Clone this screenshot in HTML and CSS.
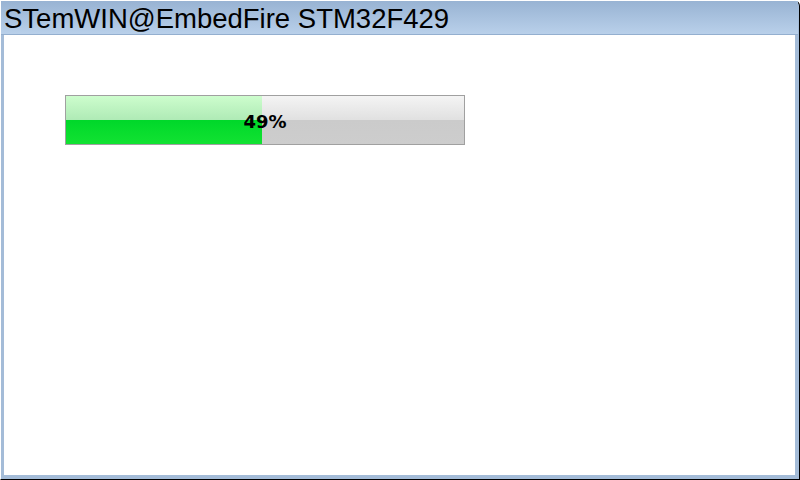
FILE: index.html
```html
<!DOCTYPE html>
<html>
<head>
<meta charset="utf-8">
<link rel="stylesheet" href="styles.css">
</head>
<body>
<div class="frame">
  <div class="inner">
    <div class="titlebar"><span class="title">STemWIN@EmbedFire STM32F429</span></div>
    <div class="client">
      <div class="progress">
        <div class="fill" style="width:196px"></div>
        <div class="rest"></div>
        <span class="label">49%</span>
      </div>
    </div>
  </div>
</div>
</body>
</html>
```
FILE: styles.css
```css
html, body {
  margin: 0;
  padding: 0;
  width: 800px;
  height: 480px;
  overflow: hidden;
  background: #ffffff;
}
.frame {
  box-sizing: border-box;
  width: 800px;
  height: 480px;
  border-left: 1px solid #ffffff;
  border-top: 1px solid #ffffff;
  border-right: 1px solid #000000;
  border-bottom: 1px solid #000000;
  background: #a4bcd8;
  padding: 0 1px 1px 0;
  display: flex;
  border-top-right-radius: 6px;
}
.inner {
  flex: 1;
  display: flex;
  flex-direction: column;
  border-left: 3px solid #a4bcd8;
  border-right: 3px solid #a4bcd8;
  border-bottom: 3px solid #a4bcd8;
  box-shadow: inset 1px 0 0 #8aa4c4;
}
.titlebar {
  height: 33px;
  background: linear-gradient(to bottom, #98b3d3, #b9d0ea);
  border-bottom: 1px solid #94afcf;
  display: flex;
  align-items: center;
  margin-left: -3px;
  margin-right: -3px;
  padding-left: 3px;
  border-top-right-radius: 5px;
}
.title {
  font-family: "Liberation Sans", Arial, sans-serif;
  font-size: 27.5px;
  color: #000000;
  line-height: 28px;
  margin-top: 3px;
  white-space: nowrap;
}
.client {
  flex: 1;
  background: #ffffff;
  padding: 60px 0 0 61px;
}
.progress {
  position: relative;
  box-sizing: border-box;
  width: 400px;
  height: 50px;
  border: 1px solid #a0a0a0;
  display: flex;
}
.fill {
  height: 100%;
  background: linear-gradient(to bottom, #cdfdcd 0%, #aeeab5 51%, #00d82a 51%, #12e232 100%);
}
.rest {
  flex: 1;
  height: 100%;
  background: linear-gradient(to bottom, #f4f4f4 0%, #e0e0e0 51%, #cbcbcb 51%, #cdcdcd 100%);
}
.label {
  position: absolute;
  left: 0;
  right: 0;
  top: 0;
  bottom: 0;
  display: flex;
  align-items: center;
  justify-content: center;
  font-family: "DejaVu Sans", sans-serif;
  font-weight: bold;
  font-size: 18px;
  color: #000000;
  padding-top: 3px;
}
```
